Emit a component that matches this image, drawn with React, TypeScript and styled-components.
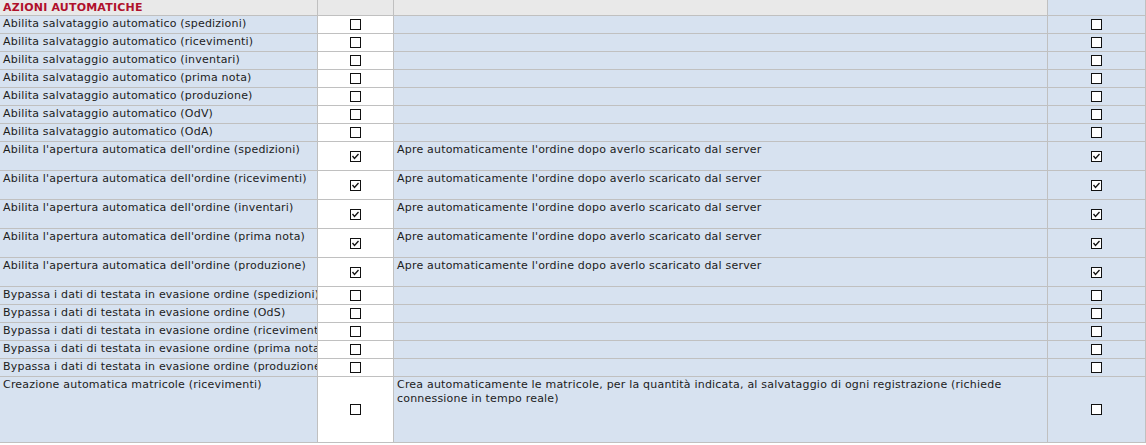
import styled, { createGlobalStyle } from 'styled-components';

const GlobalStyle = createGlobalStyle`
  html, body {
    margin: 0;
    padding: 0;
    background: #ffffff;
  }
  body {
    font-family: "DejaVu Sans", Verdana, sans-serif;
    font-size: 11px;
    letter-spacing: 0.2px;
    color: #1c1c1c;
  }
`;

const Table = styled.div`
  width: 1146px;
  display: flex;
  flex-direction: column;
  gap: 1px;
  background: #c0c0c0;
  padding-bottom: 1px;
`;

const Row = styled.div<{ $h: number }>`
  display: grid;
  grid-template-columns: 317px 75px 653px 97px;
  column-gap: 1px;
  padding-right: 1px;
  height: ${(p) => p.$h}px;
`;

const Cell = styled.div<{ $bg?: string }>`
  background: ${(p) => p.$bg || '#d7e2f0'};
  padding: 1px 3px 0;
  overflow: hidden;
  white-space: nowrap;
  line-height: 14px;
`;

const Desc = styled(Cell)`
  white-space: normal;
`;

const HeaderTitle = styled(Cell)`
  background: #e9e9e9;
  color: #b0112c;
  font-weight: bold;
  padding-top: 0;
  line-height: 15px;
`;

const CheckCell = styled.div<{ $bg?: string }>`
  background: ${(p) => p.$bg || '#d7e2f0'};
  display: flex;
  align-items: center;
  justify-content: center;
`;

const Box = styled.span`
  width: 11px;
  height: 11px;
  box-sizing: border-box;
  border: 1px solid #111;
  background: #fff;
  display: flex;
  align-items: center;
  justify-content: center;
`;

const Check = ({ on }: { on: boolean }) => (
  <Box>
    {on && (
      <svg width="9" height="9" viewBox="0 0 9 9">
        <polyline points="1.5,4 3.5,6.5 7.5,2" fill="none" stroke="#111" strokeWidth="1.3" />
      </svg>
    )}
  </Box>
);

const OPEN = "Apre automaticamente l'ordine dopo averlo scaricato dal server";

const rows: { label: string; desc?: string; on: boolean; h: number }[] = [
  { label: 'Abilita salvataggio automatico (spedizioni)', on: false, h: 17 },
  { label: 'Abilita salvataggio automatico (ricevimenti)', on: false, h: 17 },
  { label: 'Abilita salvataggio automatico (inventari)', on: false, h: 17 },
  { label: 'Abilita salvataggio automatico (prima nota)', on: false, h: 17 },
  { label: 'Abilita salvataggio automatico (produzione)', on: false, h: 17 },
  { label: 'Abilita salvataggio automatico (OdV)', on: false, h: 17 },
  { label: 'Abilita salvataggio automatico (OdA)', on: false, h: 17 },
  { label: "Abilita l'apertura automatica dell'ordine (spedizioni)", desc: OPEN, on: true, h: 28 },
  { label: "Abilita l'apertura automatica dell'ordine (ricevimenti)", desc: OPEN, on: true, h: 28 },
  { label: "Abilita l'apertura automatica dell'ordine (inventari)", desc: OPEN, on: true, h: 28 },
  { label: "Abilita l'apertura automatica dell'ordine (prima nota)", desc: OPEN, on: true, h: 28 },
  { label: "Abilita l'apertura automatica dell'ordine (produzione)", desc: OPEN, on: true, h: 28 },
  { label: 'Bypassa i dati di testata in evasione ordine (spedizioni)', on: false, h: 17 },
  { label: 'Bypassa i dati di testata in evasione ordine (OdS)', on: false, h: 17 },
  { label: 'Bypassa i dati di testata in evasione ordine (ricevimenti)', on: false, h: 17 },
  { label: 'Bypassa i dati di testata in evasione ordine (prima nota)', on: false, h: 17 },
  { label: 'Bypassa i dati di testata in evasione ordine (produzione)', on: false, h: 17 },
  {
    label: 'Creazione automatica matricole (ricevimenti)',
    desc: 'Crea automaticamente le matricole, per la quantità indicata, al salvataggio di ogni registrazione (richiede connessione in tempo reale)',
    on: false,
    h: 65,
  },
];

export default function App() {
  return (
    <>
      <GlobalStyle />
      <Table>
        <Row $h={15}>
          <HeaderTitle>AZIONI AUTOMATICHE</HeaderTitle>
          <Cell $bg="#e9e9e9" />
          <Cell $bg="#e9e9e9" />
          <Cell />
        </Row>
        {rows.map((r, i) => (
          <Row key={i} $h={r.h}>
            <Cell>{r.label}</Cell>
            <CheckCell $bg="#ffffff">
              <Check on={r.on} />
            </CheckCell>
            <Desc>{r.desc}</Desc>
            <CheckCell>
              <Check on={r.on} />
            </CheckCell>
          </Row>
        ))}
      </Table>
    </>
  );
}
